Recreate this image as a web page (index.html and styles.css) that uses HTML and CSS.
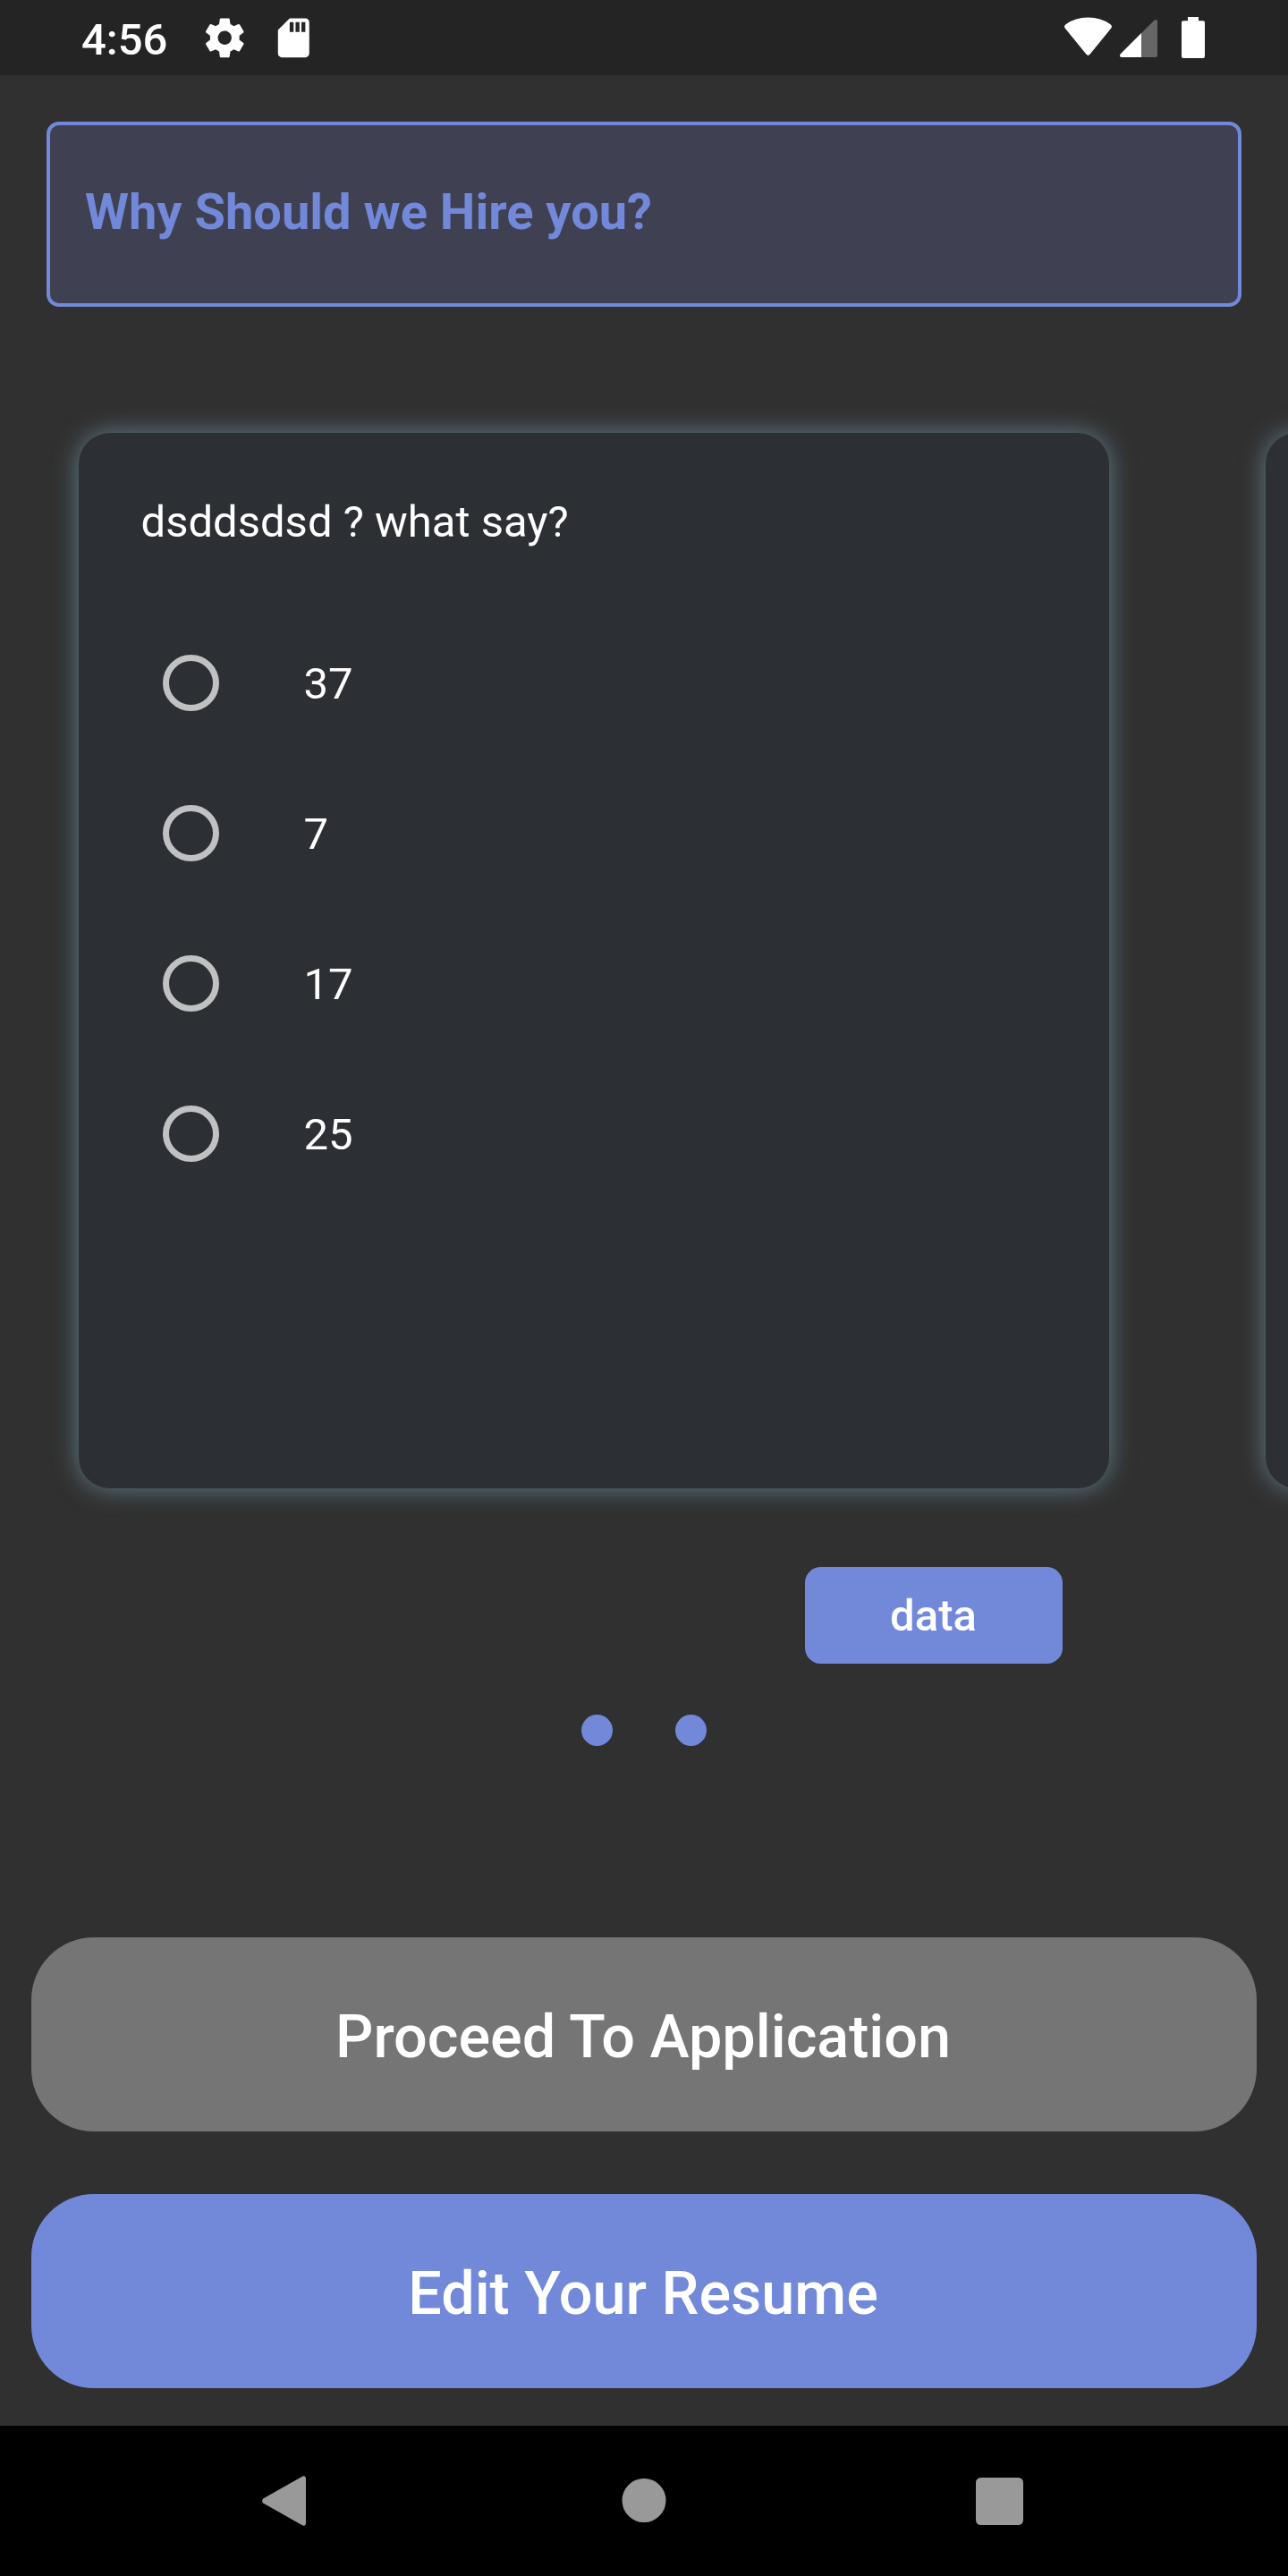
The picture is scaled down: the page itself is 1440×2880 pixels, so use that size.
FILE: index.html
```html
<!DOCTYPE html>
<html lang="en">
<head>
<meta charset="utf-8">
<title>Why Should we Hire you?</title>
<link rel="stylesheet" href="styles.css">
</head>
<body>
<div class="screen">
  <header class="status-bar">
    <span class="clock">4:56</span>
    <svg class="status-icon" viewBox="0 0 24 24"><path d="M19.43 12.98c.04-.32.07-.64.07-.98s-.03-.66-.07-.98l2.11-1.65c.19-.15.24-.42.12-.64l-2-3.46c-.12-.22-.39-.3-.61-.22l-2.49 1c-.52-.4-1.08-.73-1.69-.98l-.38-2.65C14.46 2.18 14.25 2 14 2h-4c-.25 0-.46.18-.49.42l-.38 2.65c-.61.25-1.17.59-1.69.98l-2.49-1c-.23-.09-.49 0-.61.22l-2 3.46c-.13.22-.07.49.12.64l2.11 1.65c-.04.32-.07.65-.07.98s.03.66.07.98l-2.11 1.65c-.19.15-.24.42-.12.64l2 3.46c.12.22.39.3.61.22l2.49-1c.52.4 1.08.73 1.69.98l.38 2.65c.03.24.24.42.49.42h4c.25 0 .46-.18.49-.42l.38-2.65c.61-.25 1.17-.59 1.69-.98l2.49 1c.23.09.49 0 .61-.22l2-3.46c.12-.22.07-.49-.12-.64l-2.11-1.65zM12 15.5c-1.93 0-3.5-1.57-3.5-3.5s1.57-3.5 3.5-3.5 3.5 1.57 3.5 3.5-1.57 3.5-3.5 3.5z"/></svg>
    <svg class="status-icon" viewBox="0 0 24 24"><path d="M18 2h-8L4.02 8 4 20c0 1.1.9 2 2 2h12c1.1 0 2-.9 2-2V4c0-1.100-.9-2-2-2zm-6 7h-2V4h2v5zm3 0h-2V4h2v5zm3 0h-2V4h2v5z"/></svg>
    <svg class="system-icons" width="160" height="84" viewBox="1190 0 160 84">
      <path d="M1190.700 31.500Q1189 29 1191.500 27.200Q1202 19.500 1216.500 19.500T1241.500 27.200Q1244 29 1242.300 31.500L1218.500 60.800Q1216.500 63 1214.500 60.800Z"/>
      <path class="dim" d="M1276 37L1290.500 22.700Q1292 21.500 1293.200 22.300Q1294 23 1294 24V62Q1294 64 1292 64H1276Z"/>
      <path d="M1276 37V64H1254Q1252.500 64 1252 62.500Q1251.800 61.200 1253 60Z"/>
      <path d="M1328 19H1340V23.300H1345Q1347 23.300 1347 25.300V63Q1347 65 1345 65H1323Q1321 65 1321 63V25.300Q1321 23.300 1323 23.300H1328Z"/>
    </svg>
  </header>

  <main class="content">
    <h1 class="title">Why Should we Hire you?</h1>
    <section class="pager">
      <article class="card">
        <p class="question">dsddsdsd ? what say?</p>
        <div class="option"><span class="radio"></span><span class="label">37</span></div>
        <div class="option"><span class="radio"></span><span class="label">7</span></div>
        <div class="option"><span class="radio"></span><span class="label">17</span></div>
        <div class="option"><span class="radio"></span><span class="label">25</span></div>
      </article>
      <article class="card"></article>
    </section>
    <button class="data-button">data</button>
    <div class="dots"><i class="dot"></i><i class="dot"></i></div>
    <div class="actions">
      <button class="action action-muted">Proceed To Application</button>
      <button class="action">Edit Your Resume</button>
    </div>
  </main>

  <nav class="nav-bar">
    <svg width="50" height="56" viewBox="0 0 50 56"><path d="M1.200 25.500L44 1.200Q49 -1.500 49 4V52Q49 57.500 44 54.800L1.200 30.500Q-1 28 1.200 25.500Z"/></svg>
    <svg width="50" height="50" viewBox="0 0 50 50"><circle cx="25" cy="24.500" r="24.500"/></svg>
    <svg width="53" height="53" viewBox="0 0 53 53"><rect width="53" height="53" rx="5.500"/></svg>
  </nav>
</div>
</body>
</html>
```

FILE: styles.css
```css
* {
  box-sizing: border-box;
}

body {
  margin: 0;
  background: #303030;
  color: #fff;
  font-family: Roboto, "Liberation Sans", sans-serif;
  font-size: 49px;
}

.screen {
  display: flex;
  flex-direction: column;
  width: 1440px;
  height: 2880px;
  overflow: hidden;
}

.status-bar {
  display: flex;
  align-items: center;
  gap: 24.5px;
  height: 84px;
  padding: 0 90px 0 91px;
  background: #242424;
  fill: #fff;
}

.clock {
  width: 109.5px;
  padding-top: 5px;
  font-weight: 500;
  line-height: 56px;
}

.status-icon {
  width: 52.5px;
  height: 52.5px;
}

.system-icons {
  margin-left: auto;
}

.dim {
  fill: #666;
}

.content {
  display: flex;
  flex-direction: column;
  flex: 1;
  padding-top: 52px;
}

.title {
  height: 207px;
  margin: 0 52.5px 0 52px;
  padding: 64px 39px 0;
  border: 4px solid #7289da;
  border-radius: 14px;
  background: #3f4152;
  color: #7289da;
  font-size: 56px;
  font-weight: 700;
  line-height: 66px;
}

.pager {
  display: flex;
  gap: 175px;
  margin: 140.5px 0 0 87.5px;
}

.card {
  flex: none;
  width: 1152px;
  height: 1180.5px;
  padding: 70px;
  border-radius: 35px;
  background: #2c2f33;
  box-shadow: 0 0 28px #607d8b;
}

.question {
  margin: 0 0 68px;
  padding-top: 2px;
  line-height: 56px;
}

.option {
  display: flex;
  align-items: center;
  gap: 94.5px;
  height: 168px;
  padding-left: 24.5px;
}

.label {
  padding-top: 2px;
}

.radio {
  width: 63px;
  height: 63px;
  border: 7px solid #c0c1c2;
  border-radius: 50%;
}

button {
  padding: 0;
  border: 0;
  color: #fff;
  font-family: inherit;
  font-weight: 500;
}

.data-button {
  align-self: flex-end;
  width: 288px;
  height: 108.5px;
  margin: 87.5px 252px 0 0;
  padding: 2px 1px 0 0;
  border-radius: 17.5px;
  background: #7289da;
  font-size: 49px;
}

.dots {
  display: flex;
  justify-content: center;
  gap: 70px;
  margin-top: 57px;
}

.dot {
  width: 35px;
  height: 35px;
  border-radius: 50%;
  background: #7289da;
}

.actions {
  display: flex;
  flex-direction: column;
  gap: 70px;
  margin: 214px 35px 0;
}

.action {
  height: 217px;
  padding: 4px 2px 0 0;
  border-radius: 70px;
  background: #7289da;
  font-size: 66.5px;
}

.action-muted {
  background: #757575;
}

.nav-bar {
  display: grid;
  grid-template-columns: 401.5px 396.5px 53px;
  align-items: center;
  height: 168px;
  padding-left: 293px;
  background: #000;
  fill: #999;
}
```
